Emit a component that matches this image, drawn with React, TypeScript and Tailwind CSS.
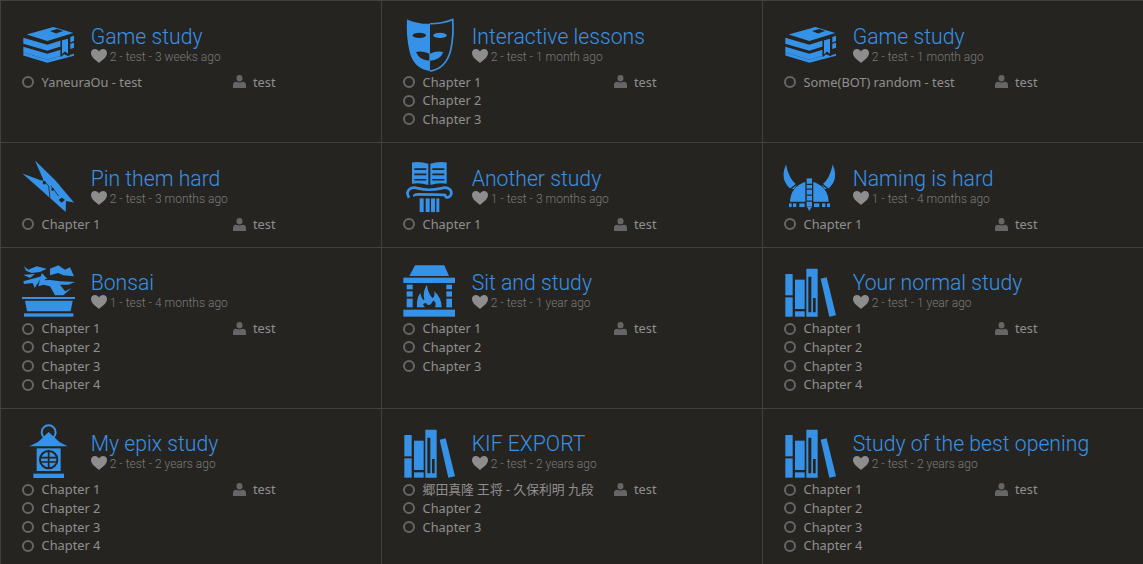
import React from "react";

const B = "#3692e7";
const D = "#262421";

function Ico({ x0, y0, children }: { x0: number; y0: number; children: React.ReactNode }) {
  return (
    <svg viewBox={`${x0} ${y0} 192 174`} className="w-[64px] h-[58px] shrink-0 overflow-visible" fill={B}>
      {children}
    </svg>
  );
}

const StudyBooks = () => (
  <Ico x0={48} y0={46.8}>
    <polygon points="80,102 160,80 220,98 142,122" />
    <polygon points="150,92 172,86 190,92 168,99" fill={D} />
    <polygon points="70,112 142,133 182,120 182,138 142,151 70,130" />
    <polygon points="70,139 142,160 182,148 182,166 142,178 70,156" />
    <polygon points="142,178 182,166 190,160 202,166 222,160 222,166 142,187 70,165 70,156" />
    <polygon points="184,118 206,112 206,164 195,156 184,166" stroke={D} strokeWidth="4" />
    <polygon points="211,110 222,106 222,122 211,126" />
    <polygon points="211,130 222,127 222,142 211,146" />
  </Ico>
);

const Mask = () => (
  <Ico x0={51} y0={46.8}>
    <path d="M81 57 Q118 72 150 70 L150 212 Q100 205 88 150 Q78 105 81 57Z" />
    <path d="M150 70 Q186 70 218 57 Q222 105 212 150 Q198 205 150 212" fill="none" stroke={B} strokeWidth="5" />
    <ellipse cx="118" cy="105" rx="20" ry="8" fill={D} />
    <ellipse cx="180" cy="105" rx="20" ry="8" />
    <path d="M108 155 Q125 150 148 160 L148 180 Q120 182 108 155Z" fill={D} />
    <path d="M150 160 Q170 150 190 155 Q180 180 150 181Z" />
  </Ico>
);

const Pin = () => (
  <Ico x0={48} y0={38.8}>
    <polygon points="105,46 165,105 222,172 198,168 197,201 150,159 125,136 67,85 124,106 130,104" />
    <path d="M126 104 L146 122 M146 122 L150 160 M152 122 L176 153" stroke={D} strokeWidth="2.5" fill="none" />
    <circle cx="133" cy="113" r="5" fill={D} />
    <circle cx="158" cy="133" r="4" fill={D} />
    <polygon points="185,157 195,165 185,173 176,165" fill={D} />
  </Ico>
);

const Bonsai = () => (
  <Ico x0={48} y0={352}>
    <polygon points="72,365 85,375 110,365 140,372 120,382 95,385 78,378" />
    <polygon points="150,372 175,362 195,375 210,368 222,395 190,392 175,385 150,392" />
    <polygon points="70,390 105,388 90,400" />
    <polygon points="70,410 125,395 120,405 104,430 98,415 72,418" />
    <polygon points="125,385 145,405 180,410 225,412 205,420 180,420 195,440 215,430 190,452 165,452 150,425 130,420 115,425" />
    <path d="M135 405 L175 402" stroke={D} strokeWidth="4" />
    <rect x="66" y="457" width="159" height="6" />
    <polygon points="75,468 218,468 212,500 81,500" />
    <rect x="72" y="506" width="148" height="10" />
  </Ico>
);

const BookColumn = () => (
  <Ico x0={36} y0={38.8}>
    <path d="M81 52 Q105 48 130 56 L130 120 Q105 112 81 116Z" />
    <path d="M136 56 Q160 48 185 52 L185 116 Q160 112 136 120Z" />
    <path d="M88 72 H124 M88 88 H124 M88 104 H124 M142 72 H178 M142 88 H178 M142 104 H178" stroke={D} strokeWidth="5" />
    <path d="M72 158 Q62 142 74 132 Q84 124 100 130 Q130 138 168 130 Q184 124 196 134 Q204 146 192 156 Q182 160 180 150 Q168 148 100 148 Q86 148 88 154" fill="none" stroke={B} strokeWidth="8" />
    <rect x="104" y="160" width="12" height="41" />
    <rect x="122" y="160" width="12" height="41" />
    <rect x="138" y="160" width="12" height="41" />
    <rect x="154" y="160" width="9" height="41" />
  </Ico>
);

const Fireplace = () => (
  <Ico x0={36} y0={352}>
    <polygon points="90,362 178,362 192,394 73,394" />
    <rect x="55" y="399" width="155" height="16" />
    <rect x="65" y="420" width="18" height="14" />
    <rect x="65" y="440" width="18" height="16" />
    <rect x="65" y="462" width="18" height="26" />
    <rect x="184" y="420" width="17" height="14" />
    <rect x="184" y="440" width="17" height="16" />
    <rect x="184" y="462" width="17" height="26" />
    <rect x="55" y="495" width="155" height="21" />
    <path d="M96 488 Q94 460 106 445 Q112 470 118 465 Q112 440 126 420 Q128 445 142 460 Q150 460 148 440 Q170 460 170 488 L150 488 Q156 470 144 468 Q136 485 128 480 Q120 470 114 480 L120 488Z" />
  </Ico>
);

const Viking = () => (
  <Ico x0={24} y0={38.8}>
    <path d="M48 58 Q34 90 46 112 Q58 134 72 132 L80 120 Q56 100 48 58Z" />
    <path d="M188 58 Q202 90 190 112 Q178 134 164 132 L156 120 Q180 100 188 58Z" />
    <path d="M60 170 Q62 125 106 110 L106 170Z" />
    <path d="M176 170 Q174 125 130 110 L130 170Z" />
    <path d="M62 132 L88 110 M174 132 L148 110" stroke={D} strokeWidth="4" />
    <rect x="110" y="100" width="16" height="84" />
    <polygon points="110,184 126,184 118,198" />
    <path d="M110 118 H126 M110 132 H126 M110 150 H126 M110 168 H126" stroke={D} strokeWidth="4" />
    <rect x="57" y="175" width="8" height="11" />
    <rect x="69" y="175" width="10" height="11" />
    <rect x="88" y="175" width="16" height="11" />
    <rect x="132" y="175" width="16" height="11" />
    <rect x="156" y="175" width="10" height="11" />
    <rect x="171" y="175" width="9" height="11" />
  </Ico>
);

const Books = () => (
  <Ico x0={24} y0={352}>
    <rect x="46" y="388" width="22" height="64" />
    <rect x="46" y="458" width="22" height="58" />
    <rect x="75" y="405" width="29" height="88" />
    <rect x="75" y="500" width="29" height="16" />
    <path fillRule="evenodd" d="M109 372 H143 V516 H109Z M115 396 V503 H124 V396Z M129 460 V503 H137 V460Z" />
    <polygon points="152,402 170,398 198,512 178,516" />
  </Ico>
);

const Lantern = () => (
  <Ico x0={48} y0={70}>
    <circle cx="146" cy="98" r="21" fill="none" stroke={B} strokeWidth="6" />
    <polygon points="146,97 178,127 203,140 88,140 114,127" />
    <rect x="110" y="146" width="72" height="68" />
    <circle cx="146" cy="180" r="26" fill="none" stroke={D} strokeWidth="6" />
    <path d="M120 174 H172 M120 187 H172 M146 154 V206" stroke={D} strokeWidth="5" />
    <rect x="100" y="222" width="92" height="13" />
  </Ico>
);

const Heart = () => (
  <svg viewBox="0 0 16 14" className="w-[16px] h-[14px] shrink-0" fill="#8d8d8d">
    <path d="M8 14 C4.5 11 0 8 0 4 C0 1.6 1.8 0 4 0 C5.7 0 7.2 1 8 2.4 C8.8 1 10.3 0 12 0 C14.2 0 16 1.6 16 4 C16 8 11.5 11 8 14Z" />
  </svg>
);

const User = () => (
  <svg viewBox="0 0 13 13" className="w-[13px] h-[13px] shrink-0" fill="#666666">
    <ellipse cx="6.5" cy="3.2" rx="3" ry="3.2" />
    <path d="M0 13 V10 Q0 7.2 3 6.8 Q6.5 8.2 10 6.8 Q13 7.2 13 10 V13Z" />
  </svg>
);

type Card = { title: string; icon: React.ReactNode; likes: number; ago: string; chapters: string[] };

const ch = (n: number) => Array.from({ length: n }, (_, i) => `Chapter ${i + 1}`);

const cards: Card[] = [
  { title: "Game study", icon: <StudyBooks />, likes: 2, ago: "3 weeks ago", chapters: ["YaneuraOu - test"] },
  { title: "Interactive lessons", icon: <Mask />, likes: 2, ago: "1 month ago", chapters: ch(3) },
  { title: "Game study", icon: <StudyBooks />, likes: 2, ago: "1 month ago", chapters: ["Some(BOT) random - test"] },
  { title: "Pin them hard", icon: <Pin />, likes: 2, ago: "3 months ago", chapters: ch(1) },
  { title: "Another study", icon: <BookColumn />, likes: 1, ago: "3 months ago", chapters: ch(1) },
  { title: "Naming is hard", icon: <Viking />, likes: 1, ago: "4 months ago", chapters: ch(1) },
  { title: "Bonsai", icon: <Bonsai />, likes: 1, ago: "4 months ago", chapters: ch(4) },
  { title: "Sit and study", icon: <Fireplace />, likes: 2, ago: "1 year ago", chapters: ch(3) },
  { title: "Your normal study", icon: <Books />, likes: 2, ago: "1 year ago", chapters: ch(4) },
  { title: "My epix study", icon: <Lantern />, likes: 2, ago: "2 years ago", chapters: ch(4) },
  { title: "KIF EXPORT", icon: <Books />, likes: 2, ago: "2 years ago", chapters: ["郷田真隆 王将 - 久保利明 九段", "Chapter 2", "Chapter 3"] },
  { title: "Study of the best opening", icon: <Books />, likes: 2, ago: "2 years ago", chapters: ch(4) },
];

function StudyCard({ c, upper }: { c: Card; upper: boolean }) {
  return (
    <div className={upper ? "border-t border-l border-[#404040] pl-[15px] pt-[14.6px] pb-[13.73px] min-w-0" : "border-t border-l border-[#404040] pl-[15px] pt-[14px] pb-[14.33px] min-w-0"}>
      <div className="flex h-[57px]">
        {c.icon}
        <div className="ml-[10.7px] min-w-0">
          <div className="font-['Roboto',sans-serif] font-light text-[21.2px] leading-[26px] mt-[8px] text-[#3692e7] whitespace-nowrap">
            {c.title}
          </div>
          <div className="flex items-center gap-[3px] mt-[-2px] h-[16px] font-['Roboto',sans-serif] font-light text-[12px] text-[#7a7a7a] whitespace-nowrap">
            <Heart />
            <span className="pt-[2px]">{c.likes} - test - {c.ago}</span>
          </div>
        </div>
      </div>
      <div className="flex ml-[6px] font-['Noto_Sans','Noto_Sans_CJK_JP',sans-serif] text-[12.8px] leading-[18.67px] text-[#8f8f8f]">
        <div className="w-[211px] shrink-0">
          {c.chapters.map((t) => (
            <div key={t} className="flex items-center whitespace-nowrap">
              <span className="w-[12px] h-[12px] rounded-full border-2 border-[#666666] mr-[7.6px] shrink-0" />
              <span>{t}</span>
            </div>
          ))}
        </div>
        <div className="flex items-center h-[18.67px] gap-[7px]">
          <User />
          <span>test</span>
        </div>
      </div>
    </div>
  );
}

export default function App() {
  return (
    <div className="w-[1143px] h-[564px] overflow-hidden bg-[#262421]">
      <div className="grid grid-cols-3">
        {cards.map((c, i) => (
          <StudyCard key={i} c={c} upper={i < 6} />
        ))}
      </div>
    </div>
  );
}
